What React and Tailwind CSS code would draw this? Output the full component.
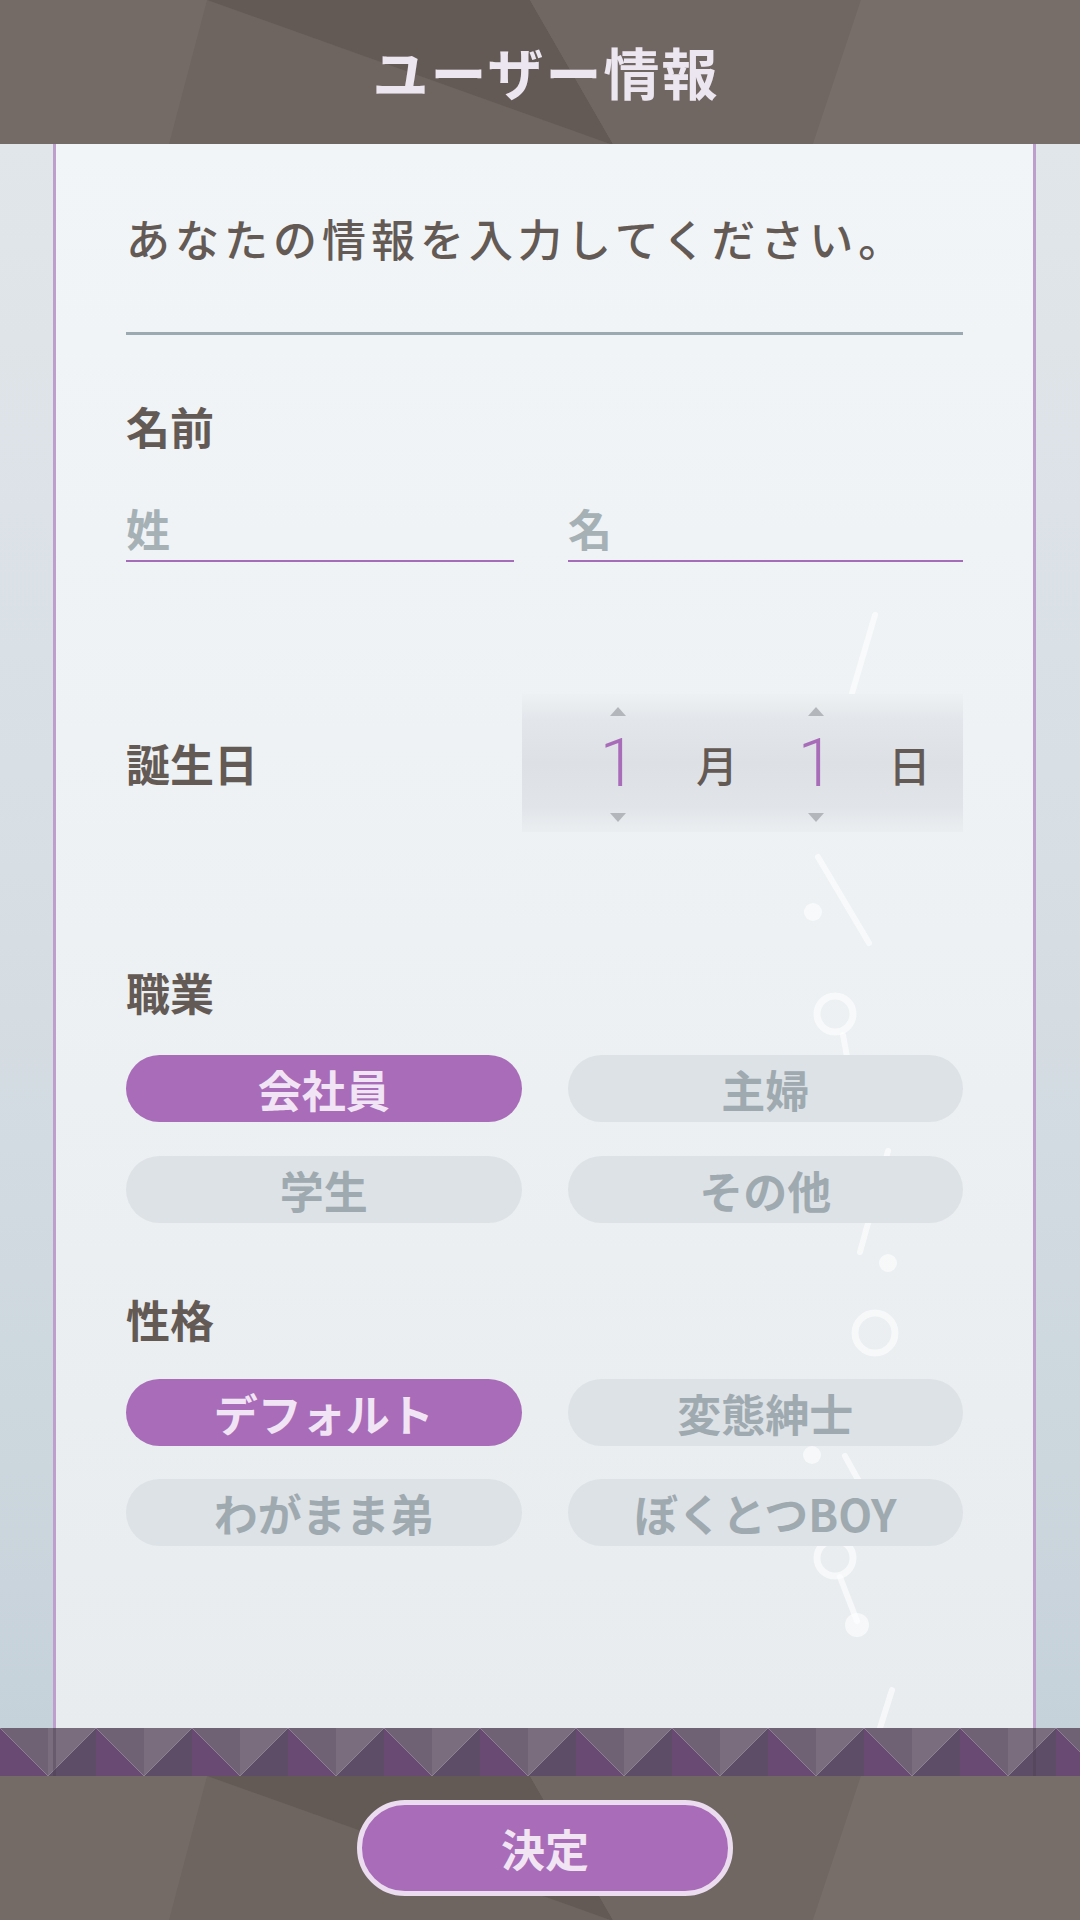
import React from 'react';

const BrownShards = () => (
  <svg className="absolute inset-0 w-full h-full" viewBox="0 0 1080 144" preserveAspectRatio="none">
    <rect width="1080" height="144" fill="#756b66" />
    <polygon points="207,0 169,144 610,144" fill="#6f6560" />
    <polygon points="207,0 530,0 613,144 610,144" fill="#635a55" />
    <polygon points="530,0 861,0 813,144 613,144" fill="#716762" />
    <polygon points="861,0 1080,0 1080,144 813,144" fill="#786e69" />
  </svg>
);

const ZigzagStrip = () => {
  const cols = Array.from({ length: 13 }, (_, i) => i * 96);
  return (
    <svg className="block" width="1080" height="48" viewBox="0 0 1080 48">
      {cols.map((x) => (
        <g key={x}>
          <polygon points={`${x},0 ${x + 48},0 ${x + 48},48`} fill="#6f6274" />
          <polygon points={`${x + 48},0 ${x + 96},0 ${x + 48},48`} fill="#7a6e7e" />
          <polygon points={`${x - 48},48 ${x},0 ${x},48`} fill="#5d4d66" />
          <polygon points={`${x},0 ${x + 48},48 ${x},48`} fill="#684a73" />
        </g>
      ))}
      <rect x="53" y="0" width="3" height="48" fill="#4e3f55" opacity="0.4" />
      <rect x="1033" y="0" width="3" height="48" fill="#4e3f55" opacity="0.4" />
    </svg>
  );
};

const Constellation = () => (
  <svg className="absolute inset-0 w-full h-full pointer-events-none" viewBox="0 0 977 1584" preserveAspectRatio="none">
    <g stroke="#ffffff" strokeOpacity="0.6" strokeWidth="6" strokeLinecap="round" fill="none">
      <line x1="819" y1="471" x2="794" y2="556" />
      <line x1="762" y1="713" x2="813" y2="799" />
      <circle cx="779" cy="870" r="18" strokeWidth="7" />
      <line x1="787" y1="891" x2="799" y2="956" />
      <line x1="832" y1="1007" x2="804" y2="1108" />
      <circle cx="819" cy="1189" r="20" strokeWidth="7" />
      <line x1="789" y1="1312" x2="816" y2="1361" />
      <circle cx="779" cy="1414" r="18" strokeWidth="7" />
      <line x1="784" y1="1433" x2="801" y2="1477" />
      <line x1="836" y1="1546" x2="824" y2="1584" />
    </g>
    <g fill="#ffffff" fillOpacity="0.6">
      <circle cx="757" cy="768" r="9" />
      <circle cx="832" cy="1119" r="9" />
      <circle cx="756" cy="1311" r="9" />
      <circle cx="801" cy="1481" r="12" />
    </g>
  </svg>
);

const Pill = ({ label, active }) => (
  <div
    className={`h-[67px] rounded-full flex items-center justify-center text-[44px] font-bold leading-none ${
      active ? 'bg-[#a86cb8] text-[#f1e4f4]' : 'bg-[#dde2e6] text-[#9faab0]'
    }`}
  >
    {label}
  </div>
);

const Spinner = ({ value }) => (
  <div className="w-[80px] h-full flex flex-col items-center">
    <div className="mt-[13px] w-0 h-0 border-x-[8px] border-x-transparent border-b-[9px] border-b-[#b3b7bb]" />
    <div className="mt-[20px] h-[56px] font-['Roboto',sans-serif] text-[66px] leading-[56px] font-light text-[#a86cb8]">{value}</div>
    <div className="mt-[21px] w-0 h-0 border-x-[8px] border-x-transparent border-t-[9px] border-t-[#b3b7bb]" />
  </div>
);

const UserInfo = () => {
  const jobs = ['会社員', '主婦', '学生', 'その他'];
  const personalities = ['デフォルト', '変態紳士', 'わがまま弟', 'ぼくとつBOY'];

  return (
    <div className="w-[1080px] h-[1920px] flex flex-col overflow-hidden font-['Noto_Sans_CJK_JP','Noto_Sans',sans-serif]">
      {/* Header */}
      <div className="relative h-[144px] flex items-center justify-center">
        <BrownShards />
        <h1 className="relative ml-[12px] text-[56px] font-bold tracking-[2px] text-[#ece6f0] leading-none mt-[-2px]">ユーザー情報</h1>
      </div>

      {/* Form */}
      <div className="flex-1 flex bg-[linear-gradient(180deg,#e1e6ea_0%,#d5dde3_55%,#c6d2da_100%)]">
        <div className="relative ml-[53px] w-[983px] border-x-[3px] border-[#bd9ecd] bg-[linear-gradient(180deg,#f2f5f7_0%,#edf1f3_50%,#e8ecef_100%)]">
          <Constellation />
          <div className="relative px-[70px] pt-[72px] text-[#645a55]">
            <p className="text-[44px] leading-[44px] font-medium tracking-[5px]">あなたの情報を入力してください。</p>
            <div className="mt-[72px] h-[3px] bg-[#9ba9b0]" />

            <h2 className="mt-[71px] text-[44px] leading-[40px] font-bold">名前</h2>
            <div className="mt-[62px] flex justify-between">
              <div className="w-[388px] border-b-2 border-[#a56cb8] pb-[12px] text-[44px] leading-[40px] font-bold text-[#a6b1b6]">姓</div>
              <div className="w-[395px] border-b-2 border-[#a56cb8] pb-[12px] text-[44px] leading-[40px] font-bold text-[#a6b1b6]">名</div>
            </div>

            <div className="mt-[132px] flex items-center justify-between">
              <h2 className="text-[44px] leading-none font-bold">誕生日</h2>
              <div className="w-[441px] h-[138px] flex bg-[linear-gradient(180deg,#eef1f3_0%,#e3e7eb_18%,#dde1e6_50%,#e1e5e9_82%,#ebeef1_100%)]">
                <div className="w-[56px]" />
                <Spinner value="1" />
                <div className="w-[118px] flex items-center justify-center text-[42px] font-medium">月</div>
                <Spinner value="1" />
                <div className="w-[107px] flex items-center justify-center text-[42px] font-medium">日</div>
              </div>
            </div>

            <h2 className="mt-[139px] text-[44px] leading-[42px] font-bold">職業</h2>
            <div className="mt-[42px] grid grid-cols-2 gap-x-[46px] gap-y-[34px]">
              {jobs.map((j, i) => (
                <Pill key={j} label={j} active={i === 0} />
              ))}
            </div>

            <h2 className="mt-[75px] text-[44px] leading-[42px] font-bold">性格</h2>
            <div className="mt-[39px] grid grid-cols-2 gap-x-[46px] gap-y-[33px]">
              {personalities.map((p, i) => (
                <Pill key={p} label={p} active={i === 0} />
              ))}
            </div>
          </div>
        </div>
      </div>

      {/* Zigzag band */}
      <ZigzagStrip />

      {/* Footer */}
      <div className="relative h-[144px] flex items-center justify-center">
        <BrownShards />
        <button className="relative ml-[10px] w-[376px] h-[96px] rounded-full border-[5px] border-[#ecdcf0] bg-[#a86cb8] text-[44px] font-bold text-[#f1e5f4] leading-none">
          決定
        </button>
      </div>
    </div>
  );
};

export default function App() {
  return <UserInfo />;
}
